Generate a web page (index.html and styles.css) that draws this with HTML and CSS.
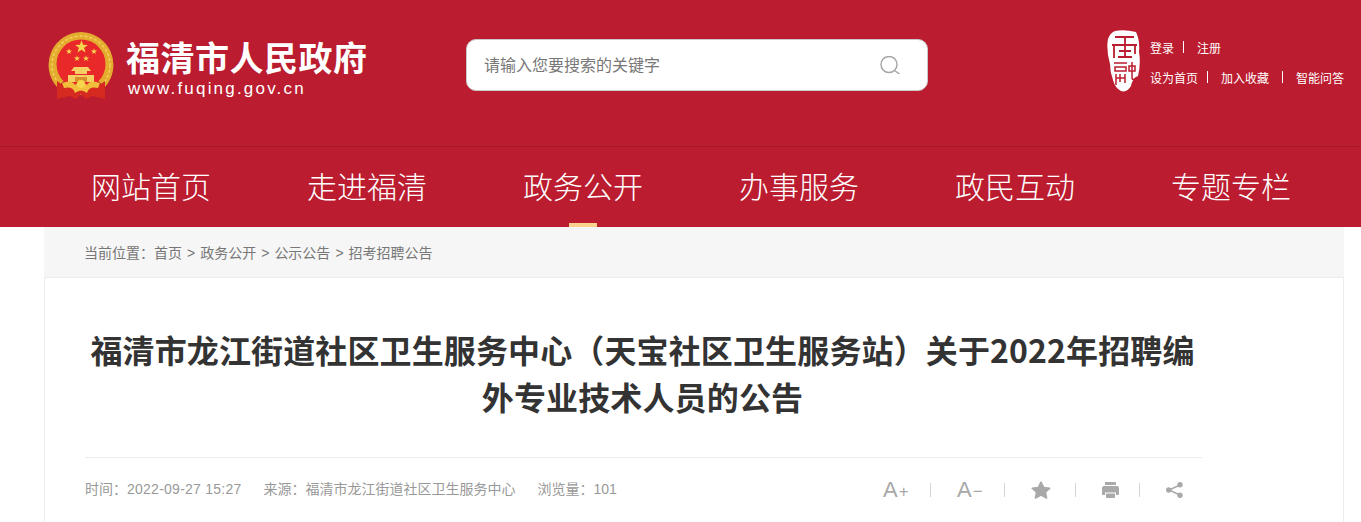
FILE: index.html
```html
<!DOCTYPE html>
<html lang="zh-CN">
<head>
    <meta charset="UTF-8">
    <title>福清市人民政府</title>
    <link rel="stylesheet" href="styles.css">
</head>
<body>
    <header class="top">
        <div class="logo">
            <svg class="emblem" width="66" height="68" viewBox="0 0 66 68">
                <defs>
                    <polygon id="star" points="0,-10 2.300,-3.200 9.500,-3.100 3.800,1.200 5.900,8.100 0,4 -5.900,8.100 -3.800,1.200 -9.500,-3.100 -2.300,-3.200" fill="#f7d54c"/>
                </defs>
                <path d="M33 0 A33 33 0 0 1 57 55 L50 49 H16 L9 55 A33 33 0 0 1 33 0 Z" fill="#e3ac2f"/>
                <circle cx="33" cy="33" r="29" fill="none" stroke="#f4cf5a" stroke-width="1.500" stroke-dasharray="3 2"/>
                <circle cx="33" cy="32" r="24.500" fill="#e9282a"/>
                <path d="M9 49 L9 67 L22 64 L28 67 L33 62 L38 67 L44 64 L57 67 L57 49 L50 54 H16 Z" fill="#d62a20"/>
                <use href="#star" transform="translate(33.500 15) scale(.68)"/>
                <use href="#star" transform="translate(21 19.500) scale(.32)"/>
                <use href="#star" transform="translate(46 19.500) scale(.32)"/>
                <use href="#star" transform="translate(29 26.500) scale(.32)"/>
                <use href="#star" transform="translate(38 26.500) scale(.32)"/>
                <path d="M26 35 H40 L43 39 H39 V42 H27 V39 H23 Z M20 43 H46 V50 H20 Z" fill="#f5cf63"/>
                <path d="M27 45 H39 V50 H27 Z" fill="#d8902c"/>
                <path d="M14 51 Q24 47 27 53 Q33 46 39 53 Q42 47 52 51 L50 56 Q41 54 39 61 Q33 56 27 61 Q25 54 16 56 Z" fill="#f2bf3c"/>
                <circle cx="33" cy="52" r="4" fill="#f7d54c"/>
            </svg>
            <div class="logo-text">
                <div class="logo-name">福清市人民政府</div>
                <div class="logo-url">www.fuqing.gov.cn</div>
            </div>
        </div>
        <div class="search">
            <span class="search-hint">请输入您要搜索的关键字</span>
            <svg width="20" height="18" viewBox="0 0 20 18" fill="none" stroke="#a3a3a3" stroke-width="1.400">
                <circle cx="9" cy="8.500" r="8"/>
                <path d="M14.500 14.500 L19.500 18"/>
            </svg>
        </div>
        <div class="tools">
            <svg class="seal" width="34" height="63" viewBox="0 0 34 63">
                <path d="M8 1 Q17 -1 29 2 Q33 10 32 22 Q34 34 31 46 Q25 49 24 56 Q20 63 14 61 Q8 58 6 50 Q3 42 3 34 Q-1 20 1 9 Q3 3 8 1 Z" fill="#fff"/>
                <path d="M8 7 H27 M18 7 V15 M5 15 H30 M7 15 V28 M28 15 V24 M12 21 H24 M18 15 V27 M11 27 H25" fill="none" stroke="#bb1c2f" stroke-width="1.800"/>
                <path d="M7 33 H20 M8 37 H19 V41 H8 Z M9 44 V55 M18 44 V53 M9 48 H18 M13 44 V52 M22 36 H28 V41 H22 Z M25 32 V47 Q25 52 30 47" fill="none" stroke="#bb1c2f" stroke-width="1.500"/>
            </svg>
            <div class="tool-links">
                <div class="tool-row">
                    <a>登录</a><i></i><a>注册</a>
                </div>
                <div class="tool-row">
                    <a>设为首页</a><i></i><a>加入收藏</a><i></i><a>智能问答</a>
                </div>
            </div>
        </div>
    </header>

    <nav class="nav">
        <a>网站首页</a>
        <a>走进福清</a>
        <a class="active">政务公开</a>
        <a>办事服务</a>
        <a>政民互动</a>
        <a>专题专栏</a>
    </nav>

    <main class="page">
        <div class="crumbs">当前位置：<a>首页</a><b>&gt;</b><a>政务公开</a><b>&gt;</b><a>公示公告</a><b>&gt;</b><a>招考招聘公告</a></div>
        <article class="article">
            <h1>福清市龙江街道社区卫生服务中心（天宝社区卫生服务站）关于2022年招聘编外专业技术人员的公告</h1>
            <div class="meta">
                <div class="meta-info">
                    <span>时间：<span class="date">2022-09-27 15:27</span></span>
                    <span>来源：福清市龙江街道社区卫生服务中心</span>
                    <span>浏览量：101</span>
                </div>
                <div class="actions">
                    <a class="font-btn">A<small>+</small></a>
                    <i></i>
                    <a class="font-btn">A<small>−</small></a>
                    <i></i>
                    <svg class="ico-star" width="20" height="18" viewBox="0 0 20 18"><polygon points="10,1 12.800,6.500 18.800,7.200 14.500,11.300 15.600,17 10,14.200 4.400,17 5.500,11.300 1.200,7.200 7.200,6.500" fill="#a9a9a9" stroke="#a9a9a9" stroke-width="1.500" stroke-linejoin="round"/></svg>
                    <i></i>
                    <svg width="17" height="16" viewBox="0 0 17 16"><path d="M3 0.500 Q3 0 3.500 0 H13.500 Q14 0 14 0.500 V3 H3 Z M2 4 H15 Q17 4 17 6 V12 Q17 13 16 13 H14 V10.500 H3 V13 H1 Q0 13 0 12 V6 Q0 4 2 4 Z M4 11.500 H13 V15 Q13 16 12 16 H5 Q4 16 4 15 Z" fill="#a9a9a9"/></svg>
                    <i></i>
                    <svg width="17" height="16" viewBox="0 0 17 16"><path d="M14 3 L3 8 L14 13" fill="none" stroke="#a9a9a9" stroke-width="1.500"/><circle cx="14" cy="2.700" r="2.700" fill="#a9a9a9"/><circle cx="2.700" cy="8" r="2.700" fill="#a9a9a9"/><circle cx="14" cy="13.300" r="2.700" fill="#a9a9a9"/></svg>
                </div>
            </div>
        </article>
    </main>
</body>
</html>
```

FILE: styles.css
```css
* {
    box-sizing: border-box;
}

body {
    margin: 0;
    background: #fff;
    font-family: "Liberation Sans", "Noto Sans CJK SC", sans-serif;
    color: #333;
}

.top {
    display: flex;
    align-items: flex-start;
    height: 147px;
    padding: 30px 0 0 48px;
    background: #bb1c2f;
    border-bottom: 1px solid #a5162a;
}

.logo {
    display: flex;
    gap: 12px;
    width: 418px;
    color: #fff;
}

.emblem {
    margin-top: 2px;
}

.logo-name {
    margin-top: 4px;
    font-family: "Noto Sans CJK SC", sans-serif;
    font-size: 34px;
    font-weight: 700;
    line-height: 46px;
    letter-spacing: 0.5px;
    white-space: nowrap;
}

.logo-url {
    margin: -1px 0 0 2px;
    font-size: 17px;
    line-height: 20px;
    letter-spacing: 2.200px;
}

.search {
    display: flex;
    align-items: center;
    justify-content: space-between;
    width: 462px;
    height: 52px;
    margin-top: 9px;
    padding: 0 27px 0 17px;
    background: #fff;
    border: 1px solid #c9c9c9;
    border-radius: 10px;
}

.search-hint {
    padding-bottom: 2px;
    font-size: 16px;
    color: #777;
}

.tools {
    display: flex;
    gap: 9px;
    margin-left: 179px;
    color: #fff;
}

.tool-links {
    padding-top: 9px;
    font-size: 12px;
}

.tool-row {
    display: flex;
    align-items: center;
    height: 16px;
    margin-bottom: 14px;
    white-space: nowrap;
}

.tool-row i {
    width: 1px;
    height: 12px;
    margin: 0 13px 0 9px;
    background: #fff;
}

.tool-row i:nth-of-type(2) {
    margin: 0 13px 0 13px;
}

.nav {
    display: flex;
    justify-content: space-between;
    height: 80px;
    padding: 0 70px 0 91px;
    background: #bb1c2f;
}

.nav a {
    position: relative;
    width: 120px;
    font-size: 30px;
    font-weight: 300;
    line-height: 81px;
    color: #fff;
    white-space: nowrap;
}

.nav a.active::after {
    content: "";
    position: absolute;
    left: 46px;
    bottom: 0;
    width: 28px;
    height: 4px;
    background: #fdd28c;
}

.page {
    width: 1300px;
    margin-left: 44px;
}

.crumbs {
    height: 51px;
    padding-left: 40px;
    background: #f6f6f6;
    border-bottom: 1px solid #ececec;
    font-size: 14px;
    line-height: 52px;
    color: #777;
}

.crumbs b {
    margin: 0 5px;
    font-weight: 400;
}

.article {
    height: 244px;
    padding: 48px 141px 0 40px;
    border-left: 1px solid #ececec;
    border-right: 1px solid #ececec;
}

.article h1 {
    margin: 0 2px 0 0;
    font-family: "Noto Sans CJK SC", sans-serif;
    font-size: 32px;
    font-weight: 700;
    line-height: 47px;
    letter-spacing: 0.130px;
    text-align: center;
    color: #333;
}

.meta {
    display: flex;
    align-items: center;
    justify-content: space-between;
    height: 65px;
    margin-top: 37px;
    border-top: 1px solid #ececec;
    font-size: 14px;
    color: #999;
}

.meta-info {
    display: flex;
    gap: 22px;
    padding-bottom: 5px;
}

.date {
    letter-spacing: 0.250px;
}

.actions {
    display: flex;
    align-items: center;
    margin-right: 19px;
}

.actions i {
    width: 1px;
    height: 14px;
    margin: 0 26px 0 20px;
    background: #d5d5d5;
}

.font-btn {
    display: flex;
    align-items: baseline;
    width: 27px;
    font-size: 22px;
    color: #a9a9a9;
}

.font-btn small {
    margin-left: 1px;
    font-size: 17px;
}

.ico-star {
    margin-right: 4px;
}
```
